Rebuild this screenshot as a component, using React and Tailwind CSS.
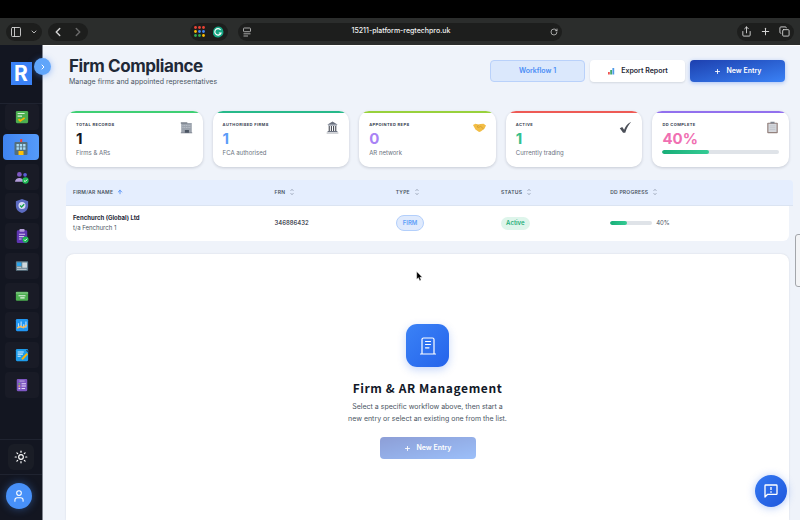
import React from 'react';
import {
  ArrowUp,
  ChevronDown,
  ChevronLeft,
  ChevronRight,
  Copy,
  PanelLeft,
  Plus,
  RotateCw,
  Share,
  Sun,
  User,
} from 'lucide-react';

/* Sidebar icons */
const navItems = [
  {
    label: 'Checklist',
    icon: (
      <>
        <rect x="1" y="1" width="14" height="14" rx="1.5" fill="#4caf50" />
        <path d="M3 4h8M3 7h5" stroke="#d7f2d8" strokeWidth="1.2" />
        <path d="M4 10.5l2 2 5-3.5" stroke="#ffb300" strokeWidth="2" fill="none" />
      </>
    ),
  },
  {
    label: 'Firm compliance',
    active: true,
    icon: (
      <>
        <path d="M7.2 0h2v4h-2z" fill="#f44336" />
        <rect x="1.5" y="3" width="13" height="13" rx="1" fill="#546e7a" />
        <path d="M3.5 5h2.4v2.4H3.5zM6.8 5h2.4v2.4H6.8zM10.1 5h2.4v2.4h-2.4zM3.5 8.3h2.4v2.4H3.5zM6.8 8.3h2.4v2.4H6.8zM10.1 8.3h2.4v2.4h-2.4z" fill="#a9dbf7" />
        <path d="M5.5 12h5v4h-5z" fill="#ffc107" />
      </>
    ),
  },
  {
    label: 'People',
    icon: (
      <>
        <circle cx="5" cy="5" r="2.7" fill="#7e57c2" />
        <circle cx="11.5" cy="5.5" r="2.1" fill="#5b5fd6" />
        <path d="M0 13.5c0-6 10-6 10 0z" fill="#b39ddb" />
        <circle cx="12" cy="12" r="3.6" fill="#1db954" />
        <path d="M10.3 12l1.3 1.3 2.3-2.4" stroke="#fff" strokeWidth="1.1" fill="none" />
      </>
    ),
  },
  {
    label: 'Protection',
    icon: (
      <>
        <path d="M8 0l7 2.5v5.2C15 12 12 14.8 8 16 4 14.8 1 12 1 7.7V2.5z" fill="#5c6bc0" />
        <circle cx="8" cy="7.5" r="4" fill="#d9dcf5" />
        <path d="M5.8 7.5l1.7 1.7 3-3.2" stroke="#16a34a" strokeWidth="1.5" fill="none" />
      </>
    ),
  },
  {
    label: 'Reviews',
    icon: (
      <>
        <rect x="2" y="1.5" width="12" height="14.5" rx="1.5" fill="#5e35b1" />
        <rect x="5" y="0" width="6" height="3" rx="1" fill="#b39ddb" />
        <path d="M4.5 6h7M4.5 8.7h6M4.5 11.4h3" stroke="#d1c4e9" strokeWidth="1.2" />
        <circle cx="12" cy="12.2" r="3.5" fill="#1db954" />
        <path d="M10.4 12.2l1.2 1.2 2.2-2.3" stroke="#fff" strokeWidth="1.1" fill="none" />
      </>
    ),
  },
  {
    label: 'News',
    icon: (
      <>
        <rect x="1" y="2.5" width="14" height="11" rx="1" fill="#607d8b" />
        <path d="M2.3 4h5v4h-5z" fill="#29a3ec" />
        <path d="M8.3 4h5.4v6H8.3z" fill="#cfd8dc" />
        <path d="M2.3 9.5h5M2.3 11.7h11" stroke="#cfd8dc" strokeWidth="1.2" />
      </>
    ),
  },
  {
    label: 'Cards',
    icon: (
      <>
        <rect x="1" y="3" width="14" height="10.5" rx="1.2" fill="#4caf50" />
        <path d="M1 4.5h14" stroke="#81c784" strokeWidth="1.5" />
        <path d="M4 7.7h8M6 10.2h5" stroke="#e8f5e9" strokeWidth="1.4" />
      </>
    ),
  },
  {
    label: 'Analytics',
    icon: (
      <>
        <rect x="1" y="1" width="14" height="14" rx="1.5" fill="#2196f3" />
        <path d="M4 11V6M7 11V4M10 11V7M12.5 11V4" stroke="#bbdefb" strokeWidth="1.3" />
        <path d="M2.5 11.5l4-2 3 1.5 4-3" stroke="#ffb74d" strokeWidth="1.6" fill="none" />
      </>
    ),
  },
  {
    label: 'Notes',
    icon: (
      <>
        <rect x="1" y="1" width="14" height="14" rx="1.5" fill="#1e9bea" />
        <path d="M3 4.5h7M3 7h6M3 9.5h3.5" stroke="#d3ecfc" strokeWidth="1.2" />
        <path d="M8 13l6-6.5" stroke="#ffb300" strokeWidth="2.3" />
        <path d="M13 2.5l2.5 2" stroke="#263b52" strokeWidth="1.3" />
      </>
    ),
  },
  {
    label: 'Forms',
    icon: (
      <>
        <rect x="2" y="1" width="12" height="14" rx="1.2" fill="#7e57c2" />
        <path d="M5 3.5h6" stroke="#b39ddb" strokeWidth="1.4" />
        <path d="M7.5 6.5h5M7.5 9.2h5M7.5 12h4" stroke="#e6dcf7" strokeWidth="1.2" />
        <path d="M4 6.5h2" stroke="#66bb6a" strokeWidth="1.5" />
        <path d="M4 9.2h2" stroke="#ffb74d" strokeWidth="1.5" />
        <path d="M4 12h2" stroke="#e6dcf7" strokeWidth="1.5" />
      </>
    ),
  },
];

/* Stat cards */
const stats = [
  {
    label: 'Total records',
    value: '1',
    note: 'Firms & ARs',
    bar: 'bg-[#3fcf74]',
    color: 'text-[#111827]',
    icon: (
      <>
        <path d="M1.5 2.500h13v12h-13z" fill="#9ca3ad" />
        <path d="M1 1.5h8v2H1z" fill="#7b828d" />
        <path d="M3 5.5h10M3 8h10" stroke="#b9bfc8" strokeWidth="1.2" strokeDasharray="1.3 .8" />
        <path d="M1 14.500h14" stroke="#6b7280" />
        <path d="M6 11h5v3.5H6z" fill="#4b5563" />
      </>
    ),
  },
  {
    label: 'Authorised firms',
    value: '1',
    note: 'FCA authorised',
    bar: 'bg-[#27b98a]',
    color: 'text-[#5b9cf8]',
    icon: (
      <>
        <path d="M8 .5l6.5 4h-13z" fill="#6b7280" />
        <path d="M2.5 5.3h11" stroke="#9ca3af" strokeWidth="1.3" />
        <path d="M4 6v6.500M6.700 6v6.500M9.300 6v6.500M12 6v6.500" stroke="#4b4f58" strokeWidth="1.4" />
        <path d="M2 13h12" stroke="#6b7280" strokeWidth="1.3" />
        <path d="M.8 14.7h14.4" stroke="#a3a8b0" strokeWidth="1.3" />
      </>
    ),
  },
  {
    label: 'Appointed reps',
    value: '0',
    note: 'AR network',
    bar: 'bg-[#98d13c]',
    color: 'text-[#a983f5]',
    icon: (
      <>
        <path d="M0 5l3-1.500 4 .7L9 3.700l4-.4L16 5.500l-2 4-4.500 3.500-2 .5L3 10.500z" fill="#f2bd45" />
        <path d="M7 4.700L5 7.300l2 .5 2.500-1.200L13 9.800" stroke="#c9932c" strokeWidth=".8" fill="none" />
      </>
    ),
  },
  {
    label: 'Active',
    value: '1',
    note: 'Currently trading',
    bar: 'bg-[#ee5a55]',
    color: 'text-[#34c08c]',
    icon: <path d="M1 9l3-1.500 2.300 3.300C8 6.500 10.500 3 15 1c-3.500 4-5.500 8-7.300 13.500H5z" fill="#4b4f58" />,
  },
  {
    label: 'DD complete',
    value: '40%',
    progress: 40,
    bar: 'bg-[#9270ee]',
    color: 'text-[#f06fb2]',
    icon: (
      <>
        <rect x="1.500" y="2" width="13" height="13" rx="1" fill="#94827e" />
        <path d="M3 3.500h10v10H3z" fill="#d5d8dd" />
        <path d="M4.500 6h7M4.500 8.300h7M4.500 10.600h7" stroke="#b8bdc5" strokeWidth=".8" />
        <path d="M5.500 1h5v2h-5z" fill="#7f858f" />
      </>
    ),
  },
];

const columns = [
  { label: 'FRN', width: 'w-1/6' },
  { label: 'Type', width: 'w-[14.5%]' },
  { label: 'Status', width: 'w-[15%]' },
  { label: 'DD Progress' },
];

function Progress({ value, className }) {
  return (
    <div role="progressbar" aria-valuenow={value} className={`h-1 rounded-full bg-[#dfe3e8] overflow-hidden ${className}`}>
      <div className="h-full rounded-full bg-gradient-to-r from-[#17ae78] to-[#34cb94]" style={{ width: `${value}%` }} />
    </div>
  );
}

function SortIcon() {
  return (
    <svg viewBox="0 0 6 8" className="w-1.5 h-2" fill="none" stroke="#9aa5b8" strokeWidth=".8">
      <path d="M1.5 3L3 1.200 4.500 3M1.500 5L3 6.800 4.500 5" />
    </svg>
  );
}

function BrowserBar() {
  const dots = ['#ea4335', '#ea4335', '#ea4335', '#fbbc04', '#4285f4', '#4285f4', '#34a853', '#34a853', '#fbbc04'];
  const pill = 'flex items-center h-[18px] rounded-full bg-[#1d1e1d]';
  return (
    <div className="grid grid-cols-[1fr_41%_1fr] items-center gap-x-2.5 h-[27px] shrink-0 px-1.5 bg-[#2b2d2c] text-[#d4d4d4]">
      <div className="flex items-center gap-1.5">
        <div className={`${pill} px-1 gap-2`}>
          <button aria-label="Sidebar"><PanelLeft className="size-3" strokeWidth={1.8} /></button>
          <button aria-label="Tab groups"><ChevronDown className="size-2" strokeWidth={2.5} /></button>
        </div>
        <div className={`${pill} px-[3px] gap-1.5`}>
          <button aria-label="Back"><ChevronLeft className="size-3.5" strokeWidth={2.5} /></button>
          <button aria-label="Forward"><ChevronRight className="size-3.5 text-[#6a6a6a]" strokeWidth={2.5} /></button>
        </div>
        <div className={`${pill} ml-auto px-1 gap-[7px]`}>
          <svg viewBox="0 0 11 11" className="size-[11px]">
            {dots.map((c, i) => (
              <circle key={i} cx={1.5 + (i % 3) * 4} cy={1.5 + Math.floor(i / 3) * 4} r="1.4" fill={c} />
            ))}
          </svg>
          <svg viewBox="0 0 12 12" className="size-3">
            <path d="M6 .5a5.500 5.500 0 1 1-5 8V6A5.500 5.500 0 0 1 6 .5z" fill="#15a683" />
            <path d="M8.600 4A3.200 3.200 0 1 0 9 7H6.800" stroke="#fff" strokeWidth="1.2" fill="none" />
          </svg>
        </div>
      </div>

      <div className={`${pill} justify-between px-1`}>
        <svg viewBox="0 0 10 10" className="size-2.5" fill="none" stroke="#b5b5b5" strokeWidth=".9">
          <rect x="1.5" y="1" width="7" height="3.7" rx=".7" />
          <path d="M1.5 6.800h7M1.500 9h4.500" />
        </svg>
        <span className="text-[7px] font-medium text-[#f2f2f2]">15211-platform-regtechpro.uk</span>
        <button aria-label="Reload"><RotateCw className="size-2" strokeWidth={2.2} /></button>
      </div>

      <div className={`${pill} justify-self-end px-1 gap-2`}>
        <button aria-label="Share"><Share className="size-[11px]" strokeWidth={2} /></button>
        <button aria-label="New tab"><Plus className="size-[11px]" strokeWidth={2.2} /></button>
        <button aria-label="Tabs"><Copy className="size-[11px]" strokeWidth={2} /></button>
      </div>
    </div>
  );
}

function Sidebar() {
  return (
    <aside className="relative flex flex-col items-center w-[43px] shrink-0 bg-[#131621] border-r border-[#80858f]">
      <div className="flex justify-center w-full h-[59px] pt-[17px] border-b border-[#1f2330]">
        <div className="flex items-center justify-center w-[21px] h-[23px] bg-[#3b82f6] text-white text-[21px] leading-none font-bold">R</div>
      </div>
      <button aria-label="Expand sidebar" className="absolute top-[13px] -right-[9px] z-10 flex items-center justify-center size-[17px] rounded-full bg-[#60a5fa] text-white shadow-[0_1px_6px_rgba(59,130,246,0.5)]">
        <ChevronRight className="size-2" strokeWidth={3} />
      </button>

      <nav className="flex flex-col justify-between w-full h-[294px] px-[3px]">
        {navItems.map((item) => (
          <a
            key={item.label}
            href="#"
            aria-label={item.label}
            className={`flex items-center justify-center h-[26px] rounded-[4px] ${item.active ? 'bg-gradient-to-r from-[#3f83f0] to-[#559bfb]' : 'ml-0.5 bg-[#191b26]'}`}
          >
            <svg viewBox="0 0 16 16" className={item.active ? 'size-4' : 'size-3.5'}>{item.icon}</svg>
          </a>
        ))}
      </nav>

      <div className="flex justify-center w-full mt-auto py-1 border-y border-[#1f2330]">
        <button aria-label="Toggle theme" className="flex items-center justify-center size-[26px] rounded-md bg-[#1a1d26] text-white">
          <Sun className="size-3.5" strokeWidth={2} />
        </button>
      </div>
      <div className="w-full h-[45px] pt-2 pl-1.5">
        <button aria-label="Account" className="flex items-center justify-center size-[26px] rounded-full bg-[#4790f8] text-white shadow-[0_0_8px_rgba(71,144,248,0.45)]">
          <User className="size-3.5" strokeWidth={1.8} />
        </button>
      </div>
    </aside>
  );
}

function StatCard({ stat }) {
  return (
    <div className="h-14 rounded-[10px] bg-white overflow-hidden shadow-[0_1px_3px_rgba(15,23,42,0.18)]">
      <div className={`h-0.5 ${stat.bar}`} />
      <div className="flex flex-col px-2.5 pt-2">
        <div className="flex justify-between h-[7px]">
          <span className="text-[4px] leading-[7px] font-bold uppercase tracking-widest text-[#374151]">{stat.label}</span>
          <svg viewBox="0 0 16 16" className="size-[13px] shrink-0">{stat.icon}</svg>
        </div>
        <span className={`text-[15px] leading-[21px] font-bold ${stat.color}`}>{stat.value}</span>
        {stat.note ? (
          <span className="text-[6px] leading-[7px] text-[#6b7280]">{stat.note}</span>
        ) : (
          <Progress value={stat.progress} className="mt-px" />
        )}
      </div>
    </div>
  );
}

function FirmTable() {
  return (
    <table className="w-[calc(100%+4px)] table-fixed text-left">
      <thead>
        <tr className="h-[25px] bg-[#e5eefe] text-[5px] uppercase tracking-wider text-[#4b5563] border-b border-[#dbe4f2]">
          <th className="w-[28%] pl-[7px] font-semibold rounded-tl-md">
            <span className="flex items-center gap-1">
              Firm/AR Name <ArrowUp className="size-1.5 text-[#3b82f6]" strokeWidth={3} />
            </span>
          </th>
          {columns.map((col) => (
            <th key={col.label} className={`pl-[5px] font-semibold ${col.width || ''}`}>
              <span className="flex items-center gap-1">{col.label} <SortIcon /></span>
            </th>
          ))}
          <th className="w-1 rounded-tr-md" aria-hidden="true" />
        </tr>
      </thead>
      <tbody>
        <tr className="h-9 text-[6px] leading-[10px] text-[#1f2937]">
          <td className="pl-[7px] bg-white rounded-bl-md">
            <div className="font-bold">Fenchurch (Global) Ltd</div>
            <div className="text-[#4b5563]">t/a Fenchurch 1</div>
          </td>
          <td className="pl-[5px] bg-white font-medium">346886432</td>
          <td className="pl-[5px] bg-white">
            <span className="inline-flex items-center h-4 px-1.5 rounded-full border border-[#b3cffb] bg-[#dfeafd] font-semibold text-[#60a0f8]">FIRM</span>
          </td>
          <td className="pl-[5px] bg-white">
            <span className="inline-flex items-center h-[13px] px-[5px] rounded-full bg-[#def5eb] font-semibold text-[#22ad78]">Active</span>
          </td>
          <td className="pl-[5px] bg-white rounded-br-md">
            <div className="flex items-center gap-1 text-[#4b5563]">
              <Progress value={40} className="w-[42px]" /> 40%
            </div>
          </td>
          <td aria-hidden="true" />
        </tr>
      </tbody>
    </table>
  );
}

function EmptyState() {
  return (
    <section className="flex-1 flex flex-col items-center pt-[70px] pb-15 rounded-t-lg bg-white text-center shadow-[0_0_2px_rgba(15,23,42,0.12)]">
      <div className="flex items-center justify-center size-[43px] rounded-[11px] bg-gradient-to-br from-[#3b82f6] to-[#2563eb] shadow-[0_3px_8px_rgba(37,99,235,0.25)]">
        <svg viewBox="0 0 18 20" className="w-[18px] h-5" fill="none" stroke="#fff" strokeWidth="1.2" strokeLinecap="round">
          <path d="M3 18V3.500A1.500 1.500 0 0 1 4.500 2h9A1.500 1.500 0 0 1 15 3.500V18M1.500 18h15M6.500 5.500h5M6.500 8.500h5M6.500 11.800h3.500" />
        </svg>
      </div>
      <h2 className="mt-3 text-[12px] leading-[18px] font-bold tracking-wider text-[#111827] font-['Noto_Sans_CJK_JP','Noto_Sans',sans-serif]">
        Firm &amp; AR Management
      </h2>
      <p className="mt-1 text-[7px] leading-[12px] text-[#4b5563]">
        Select a specific workflow above, then start a<br />
        new entry or select an existing one from the list.
      </p>
      <button disabled className="flex items-center justify-center gap-1.5 w-24 h-[22px] mt-3 rounded-[4px] bg-gradient-to-br from-[#1e40af] to-[#3b82f6] text-[7px] font-semibold text-white opacity-50">
        <Plus className="size-[7px]" strokeWidth={3} /> New Entry
      </button>
    </section>
  );
}

export default function App() {
  const action = 'flex items-center justify-center gap-1.5 w-[95px] h-[22px] rounded-[4px] text-[7px] font-semibold';
  return (
    <div className="h-screen flex flex-col overflow-hidden bg-black pt-[18px] font-['Inter',sans-serif]">
      <BrowserBar />
      <div className="flex-1 flex min-h-0">
        <Sidebar />
        <main className="flex-1 flex flex-col min-w-0 pl-[23px] pr-[11px] border-t border-white bg-[#eff3fa]">
          <header className="flex items-start justify-between pt-2.5 pl-[3px] pr-1">
            <div>
              <h1 className="text-[17px] leading-5 font-bold tracking-tight text-[#1f2937]">Firm Compliance</h1>
              <p className="text-[7px] leading-[11px] text-[#4b5563]">Manage firms and appointed representatives</p>
            </div>
            <div className="flex gap-[5px] pt-1">
              <button className={`${action} border border-[#b9d1fa] bg-[#dbe8fc] text-[#4a8df6]`}>Workflow 1</button>
              <button className={`${action} bg-white text-[#1f2937] shadow-[0_1px_2px_rgba(15,23,42,0.12)]`}>
                <svg viewBox="0 0 8 8" className="size-2">
                  <path d="M1 5h1.800v2.500H1z" fill="#ef5350" />
                  <path d="M3.200 3h1.800v4.500H3.200z" fill="#43a86b" />
                  <path d="M5.400 1h1.800v6.500H5.400z" fill="#4f9be8" />
                </svg>
                Export Report
              </button>
              <button className={`${action} bg-gradient-to-br from-[#1e40af] to-[#3b82f6] text-white shadow-[0_1px_4px_rgba(37,99,235,0.35)]`}>
                <Plus className="size-[7px]" strokeWidth={3} /> New Entry
              </button>
            </div>
          </header>

          <div className="grid grid-cols-5 gap-2.5 mt-6 mb-[13px]">
            {stats.map((stat) => <StatCard key={stat.label} stat={stat} />)}
          </div>

          <FirmTable />

          <div className="flex-1 flex flex-col mt-[13px]">
            <EmptyState />
          </div>
        </main>
      </div>

      {/* Floating items over the page */}
      <button aria-label="Feedback" className="fixed right-[13px] bottom-[13px] flex items-center justify-center size-8 rounded-full bg-gradient-to-br from-[#3478f2] to-[#1f57dc] shadow-[0_1px_8px_rgba(37,99,235,0.35)]">
        <svg viewBox="0 0 24 24" className="size-4" fill="none" stroke="#fff" strokeWidth="2" strokeLinejoin="round">
          <path d="M3 21V4a1 1 0 0 1 1-1h16a1 1 0 0 1 1 1v12a1 1 0 0 1-1 1H7zM12 6v4.500M12 12.500v2" />
        </svg>
      </button>
      <div className="fixed -right-1 top-[234px] w-[9px] h-[53px] rounded-[3px] border border-[#a3a6ab] bg-[#f3f4f6]" />
      <svg viewBox="0 0 10 14" className="fixed left-[52%] top-[271px] w-[7px] h-[11px]">
        <path d="M1 0v11l2.500-2.300L5.300 13l2-.9-1.800-4H9z" fill="#000" stroke="#fff" strokeWidth=".6" />
      </svg>
    </div>
  );
}
